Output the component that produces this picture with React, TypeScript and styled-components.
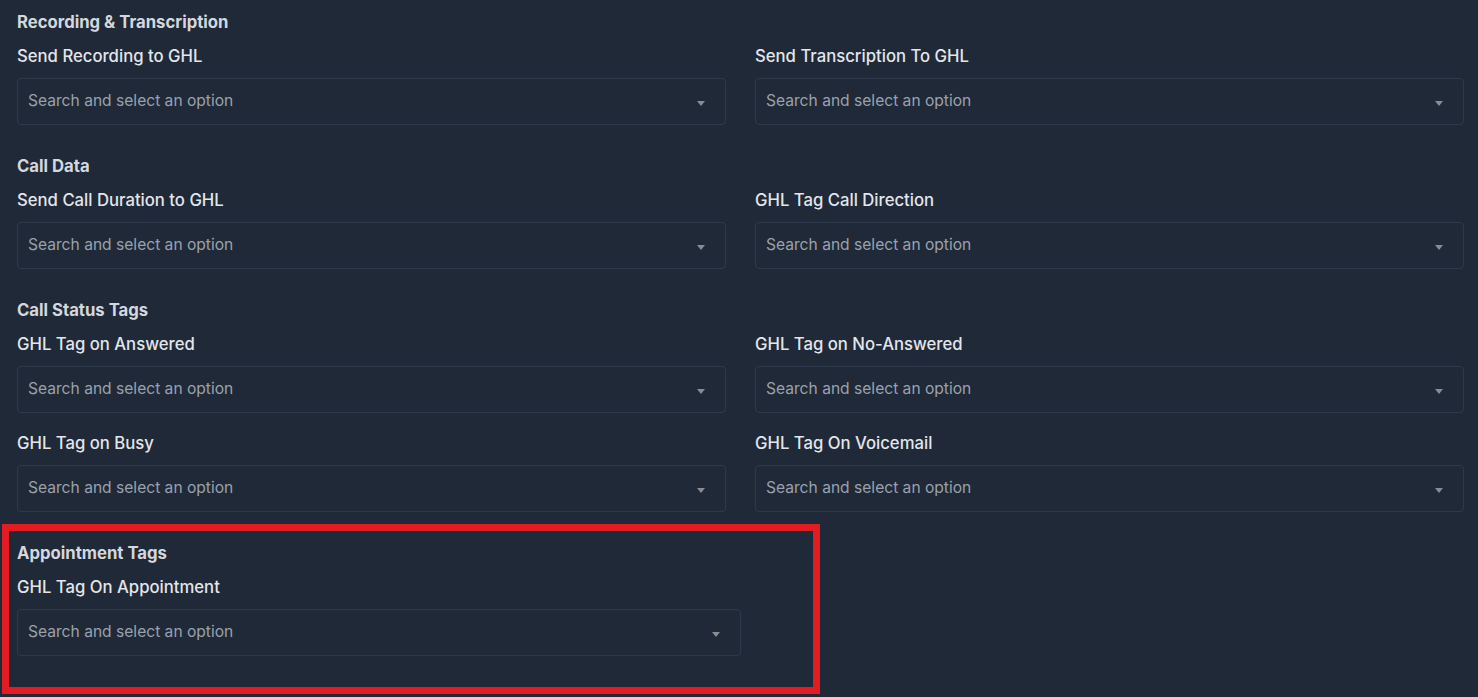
import React from 'react';
import styled, { createGlobalStyle } from 'styled-components';

interface IField {
  label: string;
}

interface ISection {
  title: string;
  rows: IField[][];
}

const sections: ISection[] = [
  {
    title: 'Recording & Transcription',
    rows: [[{ label: 'Send Recording to GHL' }, { label: 'Send Transcription To GHL' }]],
  },
  {
    title: 'Call Data',
    rows: [[{ label: 'Send Call Duration to GHL' }, { label: 'GHL Tag Call Direction' }]],
  },
  {
    title: 'Call Status Tags',
    rows: [
      [{ label: 'GHL Tag on Answered' }, { label: 'GHL Tag on No-Answered' }],
      [{ label: 'GHL Tag on Busy' }, { label: 'GHL Tag On Voicemail' }],
    ],
  },
];

const SelectBox: React.FC<{ $wide?: boolean }> = ({ $wide }) => (
  <Select $wide={$wide}>
    <Placeholder>Search and select an option</Placeholder>
    <Caret />
  </Select>
);

const App: React.FC = () => {
  return (
    <>
      <GlobalStyle />
      <Page>
        {sections.map((section) => (
          <Section key={section.title}>
            <SectionTitle>{section.title}</SectionTitle>
            <Rows>
              {section.rows.map((row, i) => (
                <Row key={i}>
                  {row.map((field) => (
                    <Field key={field.label}>
                      <Label>{field.label}</Label>
                      <SelectBox />
                    </Field>
                  ))}
                </Row>
              ))}
            </Rows>
          </Section>
        ))}
        <Highlight>
          <SectionTitle>Appointment Tags</SectionTitle>
          <Field>
            <Label>GHL Tag On Appointment</Label>
            <SelectBox $wide />
          </Field>
        </Highlight>
      </Page>
    </>
  );
};

const GlobalStyle = createGlobalStyle`
  html, body {
    margin: 0;
    padding: 0;
    background: #1f2938;
  }
  body {
    font-family: Inter, 'Noto Sans', sans-serif;
  }
`;

const Page = styled.div`
  min-height: 697px;
  box-sizing: border-box;
  background: #1f2938;
  padding: 12px 14px 3px 17px;
  display: flex;
  flex-direction: column;
  gap: 31px;
`;

const Section = styled.section`
  display: flex;
  flex-direction: column;
  gap: 14px;
`;

const SectionTitle = styled.div`
  font-size: 16.7px;
  line-height: 20px;
  font-weight: 700;
  color: #d4d7dd;
`;

const Rows = styled.div`
  display: flex;
  flex-direction: column;
  gap: 20px;
`;

const Row = styled.div`
  display: grid;
  grid-template-columns: 1fr 1fr;
  column-gap: 29px;
`;

const Field = styled.div`
  display: flex;
  flex-direction: column;
  gap: 12px;
`;

const Label = styled.div`
  font-size: 16.7px;
  line-height: 20px;
  font-weight: 500;
  color: #e3e6ea;
`;

const Select = styled.div<{ $wide?: boolean }>`
  height: 47px;
  box-sizing: border-box;
  width: ${(p) => (p.$wide ? '724px' : '100%')};
  border: 1px solid #2e3a4b;
  border-radius: 4px;
  display: flex;
  align-items: center;
  justify-content: space-between;
  padding: 0 20px 3px 10px;
  cursor: pointer;
`;

const Placeholder = styled.span`
  font-size: 15.6px;
  color: #9aa1ab;
`;

const Caret = styled.span`
  width: 0;
  height: 0;
  margin-top: 7px;
  border-left: 4px solid transparent;
  border-right: 4px solid transparent;
  border-top: 5px solid #8a8c90;
`;

const Highlight = styled.div`
  margin: -19px 0 0 -15px;
  width: 818px;
  height: 170px;
  box-sizing: border-box;
  border: 7px solid #e31b23;
  padding: 12px 0 0 8px;
  display: flex;
  flex-direction: column;
  gap: 14px;
`;

export default App;
